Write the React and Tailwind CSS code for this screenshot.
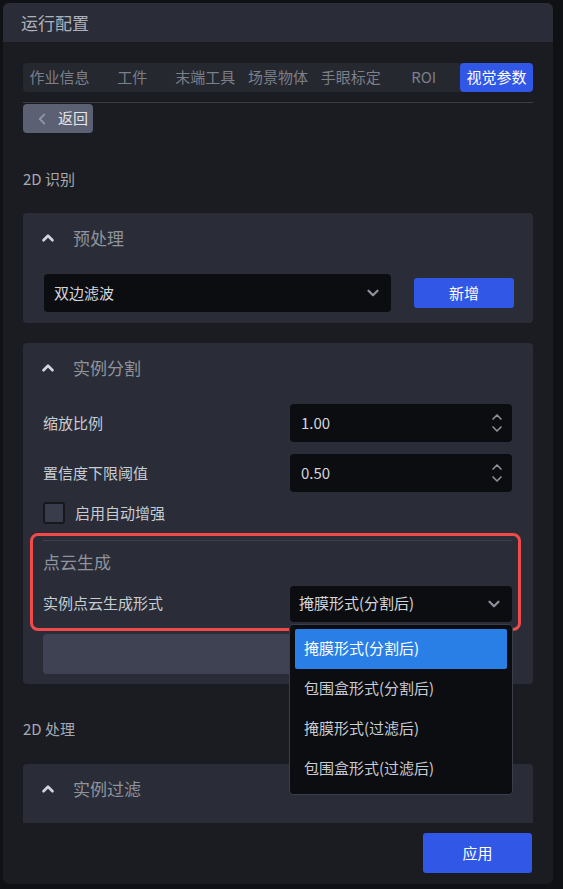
import React, { useState } from "react";
import { ChevronUp, ChevronDown, ChevronLeft } from "lucide-react";

const tabs = ["作业信息", "工件", "末端工具", "场景物体", "手眼标定", "ROI", "视觉参数"];
const modes = ["掩膜形式(分割后)", "包围盒形式(分割后)", "掩膜形式(过滤后)", "包围盒形式(过滤后)"];

const CardHeader = ({ title }) => (
  <div className="h-[50px] flex items-center pl-[16px]">
    <ChevronUp size={18} strokeWidth={3.5} className="text-[#d3d6dc]" />
    <span className="ml-[16px] text-[17px] text-[#8e939d]">{title}</span>
  </div>
);

const NumberInput = ({ value }) => (
  <div className="w-[222px] h-[38px] bg-[#0c0d11] rounded-[4px] flex items-center pl-[11px] pr-[7px]">
    <span className="flex-1 text-[15px] text-[#d4d7dd]">{value}</span>
    <div className="flex flex-col items-center text-[#8c909a] -space-y-[4px]">
      <ChevronUp size={16} strokeWidth={2.5} />
      <ChevronDown size={16} strokeWidth={2.5} />
    </div>
  </div>
);

export default function App() {
  const [tab, setTab] = useState(6);
  const [mode, setMode] = useState(0);

  return (
    <div
      className="w-[563px] h-[889px] bg-[#101115] pt-[3px] pl-[3px] overflow-hidden"
      style={{ fontFamily: '"Noto Sans CJK SC", "Noto Sans", sans-serif' }}
    >
      <div className="w-[550px] h-[881px] rounded-md bg-[#1b1c21] flex flex-col overflow-hidden">
        <div className="h-[39px] shrink-0 bg-[#2a2d37] flex items-center px-[18px] text-[17px] text-[#adb1ba]">
          运行配置
        </div>

        <div className="flex-1 overflow-hidden px-[20px]">
          <div className="mt-[21px] h-[29px] bg-[#262830] rounded-[4px] flex">
            {tabs.map((t, i) => (
              <button
                key={t}
                onClick={() => setTab(i)}
                className={`flex-1 rounded-[4px] text-[15px] ${
                  tab === i ? "bg-[#3157e6] text-white" : "text-[#7b7f8a]"
                }`}
              >
                {t}
              </button>
            ))}
          </div>
          <div className="mt-[10px] h-px bg-[#393b45]" />

          <button className="mt-px w-[70px] h-[29px] bg-[#5b6072] rounded-[4px] flex items-center pl-[10px] text-[15px] text-[#e3e5ea]">
            <ChevronLeft size={18} strokeWidth={2.5} className="text-[#8f94a3]" />
            <span className="ml-[7px]">返回</span>
          </button>

          <div className="mt-[36px] text-[15px] leading-[20px] text-[#a5a9b2]">2D 识别</div>

          <div className="mt-[24px] bg-[#2a2d37] rounded-[4px]">
            <CardHeader title="预处理" />
            <div className="flex items-center pl-[21px] pr-[19px] pt-[11px] pb-[11px]">
              <div className="w-[347px] h-[38px] bg-[#0c0d11] rounded-[4px] flex items-center pl-[10px] pr-[9px]">
                <span className="flex-1 text-[15px] text-[#d4d7dd]">双边滤波</span>
                <ChevronDown size={18} strokeWidth={3} className="text-[#8c909a]" />
              </div>
              <button className="ml-auto w-[100px] h-[30px] bg-[#3157e6] rounded-[3px] text-[15px] text-white">
                新增
              </button>
            </div>
          </div>

          <div className="relative mt-[20px] bg-[#2a2d37] rounded-[4px]">
            <CardHeader title="实例分割" />
            <div className="pl-[20px] pr-[21px] pb-[10px]">
              <div className="mt-[11px] flex items-center justify-between">
                <span className="text-[15px] text-[#c8ccd3]">缩放比例</span>
                <NumberInput value="1.00" />
              </div>
              <div className="mt-[12px] flex items-center justify-between">
                <span className="text-[15px] text-[#c8ccd3]">置信度下限阈值</span>
                <NumberInput value="0.50" />
              </div>
              <label className="mt-[10px] flex items-center">
                <span className="w-[22px] h-[22px] rounded-[3px] bg-[#393c4a] border-2 border-[#17181c]" />
                <span className="ml-[10px] text-[15px] text-[#c8ccd3]">启用自动增强</span>
              </label>
              <div className="mt-[15px] h-px bg-[#3d404b]" />
              <div className="mt-[9px] text-[17px] leading-[24px] text-[#8e939d]">点云生成</div>
              <div className="relative mt-[12px] flex items-center justify-between">
                <span className="text-[15px] text-[#c8ccd3]">实例点云生成形式</span>
                <div className="w-[222px] h-[36px] bg-[#0c0d11] rounded-[4px] flex items-center pl-[9px] pr-[9px]">
                  <span className="flex-1 text-[15px] text-[#d4d7dd]">{modes[mode]}</span>
                  <ChevronDown size={18} strokeWidth={3} className="text-[#8c909a]" />
                </div>
                <div className="absolute z-20 right-[-1px] top-[38px] w-[224px] bg-[#0c0d11] border border-[#3b3e48] rounded-[4px] px-[5px] pt-[4px] pb-[5px]">
                  {modes.map((m, i) => (
                    <div
                      key={m}
                      onClick={() => setMode(i)}
                      className={`h-[40px] flex items-center pl-[9px] text-[15px] ${
                        mode === i ? "bg-[#2a7fe7] text-white rounded-[2px]" : "text-[#c8ccd3]"
                      }`}
                    >
                      {m}
                    </div>
                  ))}
                </div>
              </div>
              <div className="mt-[12px] h-[40px] bg-[#3e4252] rounded-[4px]" />
            </div>
            <div className="absolute z-10 left-[7px] top-[190px] w-[491px] h-[98px] border-[3px] border-[#f04a4a] rounded-[8px] pointer-events-none" />
          </div>

          <div className="mt-[35px] text-[15px] leading-[20px] text-[#a5a9b2]">2D 处理</div>

          <div className="mt-[25px] h-[120px] bg-[#2a2d37] rounded-t-[4px]">
            <CardHeader title="实例过滤" />
          </div>
        </div>

        <div className="h-[61px] shrink-0 flex justify-end pt-[10px] pr-[21px]">
          <button className="w-[109px] h-[40px] bg-[#3157e6] rounded-[3px] text-[15px] text-white">应用</button>
        </div>
      </div>
    </div>
  );
}
